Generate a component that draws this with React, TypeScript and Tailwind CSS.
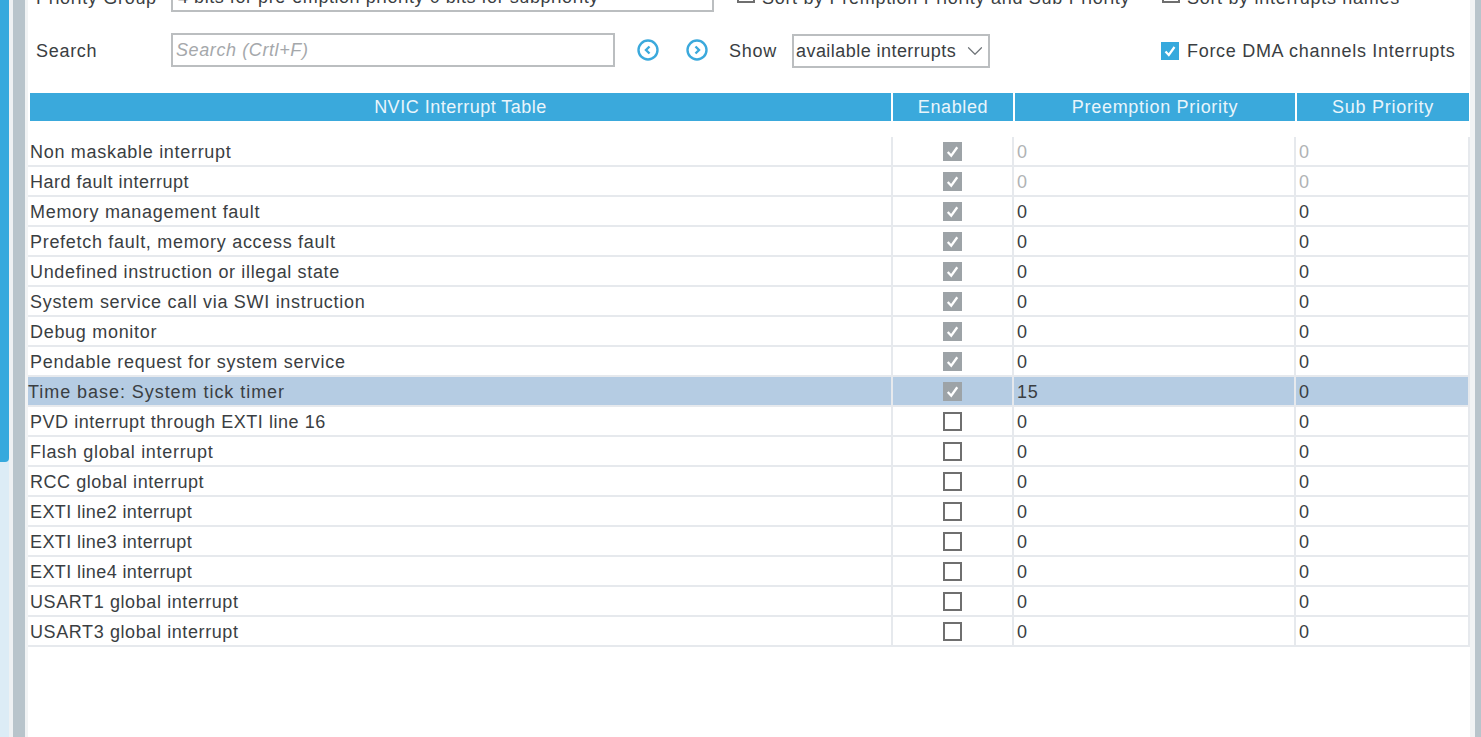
import { ChevronDown } from "lucide-react";

type Row = { name: string; on: boolean; pre: string; dim?: boolean; sel?: boolean; fit?: string };

const rows: Row[] = [
  { name: "Non maskable interrupt", on: true, pre: "0", dim: true },
  { name: "Hard fault interrupt", on: true, pre: "0", dim: true, fit: "tracking-[0.5px]" },
  { name: "Memory management fault", on: true, pre: "0" },
  { name: "Prefetch fault, memory access fault", on: true, pre: "0" },
  { name: "Undefined instruction or illegal state", on: true, pre: "0", fit: "tracking-[0.65px]" },
  { name: "System service call via SWI instruction", on: true, pre: "0" },
  { name: "Debug monitor", on: true, pre: "0" },
  { name: "Pendable request for system service", on: true, pre: "0" },
  { name: "Time base: System tick timer", on: true, pre: "15", sel: true, fit: "tracking-[0.95px]" },
  { name: "PVD interrupt through EXTI line 16", on: false, pre: "0", fit: "tracking-[0.55px]" },
  { name: "Flash global interrupt", on: false, pre: "0" },
  { name: "RCC global interrupt", on: false, pre: "0", fit: "tracking-[0.55px]" },
  { name: "EXTI line2 interrupt", on: false, pre: "0", fit: "tracking-[0.4px]" },
  { name: "EXTI line3 interrupt", on: false, pre: "0", fit: "tracking-[0.4px]" },
  { name: "EXTI line4 interrupt", on: false, pre: "0", fit: "tracking-[0.4px]" },
  { name: "USART1 global interrupt", on: false, pre: "0", fit: "tracking-[0.6px]" },
  { name: "USART3 global interrupt", on: false, pre: "0", fit: "tracking-[0.6px]" },
];

const headers = [
  { label: "NVIC Interrupt Table", cls: "tracking-[0.5px]" },
  { label: "Enabled", cls: "tracking-[0.6px]" },
  { label: "Preemption Priority", cls: "tracking-[0.7px]" },
  { label: "Sub Priority", cls: "tracking-[0.75px]" },
];

const Check = () => (
  <svg viewBox="0 0 18 18" className="w-full h-full" fill="none" stroke="white" strokeWidth="2.2">
    <path d="M4.5 9.5 L7.8 13 L13.5 5" />
  </svg>
);

const Box = ({ on }: { on: boolean }) =>
  on ? (
    <span className="block w-[19px] h-[19px] bg-[#9da3a7]">
      <Check />
    </span>
  ) : (
    <span className="block w-[19px] h-[19px] bg-white border-2 border-[#6f6f6f]" />
  );

const Circle = ({ d }: { d: string }) => (
  <svg viewBox="0 0 22 22" className="w-[22px] h-[22px]" fill="none" stroke="#3ba9dc">
    <circle cx="11" cy="11" r="9.5" strokeWidth="2.4" />
    <path d={d} strokeWidth="2.4" />
  </svg>
);

export default function App() {
  return (
    <div className="flex h-[737px] w-[1481px] overflow-hidden bg-white text-[18px] tracking-[0.7px] text-[#3a3e42] font-['Liberation_Sans',Arial,sans-serif]">
      {/* left edge with scroll thumb */}
      <div className="w-[9px] shrink-0 bg-[#dcecf6]">
        <div className="h-[462px] bg-[#36a9dd] rounded-br-[4px]" />
      </div>
      <div className="w-[4px] shrink-0 bg-[#eef1f3]" />
      <div className="w-[12px] shrink-0 bg-[#b8c4cb]" />
      <div className="w-[3px] shrink-0 bg-[#f1f3f4]" />

      <div className="w-[1442px] shrink-0">
        {/* clipped top row */}
        <div className="flex h-[36px] -mt-[24px] items-center">
          <span className="ml-[8px] w-[135px] whitespace-nowrap pt-[8px]">Priority Group</span>
          <div className="w-[543px] h-[36px] flex items-center px-[5px] pt-[6px] border-2 border-[#bbbec0] tracking-[0.55px] whitespace-nowrap">
            4 bits for pre-emption priority 0 bits for subpriority
          </div>
          <span className="ml-[23px] block w-[18px] h-[18px] bg-white border-2 border-[#6f6f6f]" />
          <span className="ml-[7px] w-[400px] whitespace-nowrap pt-[8px]">Sort by Premption Priority and Sub Priority</span>
          <span className="block w-[18px] h-[18px] bg-white border-2 border-[#6f6f6f]" />
          <span className="ml-[7px] whitespace-nowrap pt-[8px]">Sort by interrupts names</span>
        </div>

        {/* search row */}
        <div className="flex h-[34px] mt-[21px] items-center">
          <span className="ml-[8px] w-[135px] pt-[2px]">Search</span>
          <div className="w-[444px] h-[34px] flex items-center px-[3px] border-2 border-[#bbbec0] italic tracking-[0.6px] text-[#a5a8ab]">
            Search (Crtl+F)
          </div>
          <span className="ml-[22px]">
            <Circle d="M12.5 7.5 L9 11 L12.5 14.5" />
          </span>
          <span className="ml-[27px]">
            <Circle d="M9.5 7.5 L13 11 L9.5 14.5" />
          </span>
          <span className="ml-[21px] w-[63px] pt-[2px]">Show</span>
          <div className="mt-[2px] w-[198px] h-[34px] flex items-center justify-between pl-[2px] border-2 border-[#bbbec0] tracking-[0.45px] whitespace-nowrap">
            available interrupts
            <ChevronDown size={26} strokeWidth={1.1} className="text-[#6f7478]" />
          </div>
          <span className="ml-[171px] mt-[1px] block w-[18px] h-[18px] bg-[#36a9dd]">
            <Check />
          </span>
          <span className="ml-[8px] pt-[2px] whitespace-nowrap">Force DMA channels Interrupts</span>
        </div>

        {/* table header */}
        <div className="grid grid-cols-[861px_120px_280px_172px] gap-x-[2px] h-[28px] mt-[26px] ml-[2px] w-[1439px] bg-white text-[#e9f5fb]">
          {headers.map((h) => (
            <div key={h.label} className={"bg-[#3aa9dc] flex items-center justify-center " + h.cls}>
              {h.label}
            </div>
          ))}
        </div>

        {/* table rows */}
        <div className="mt-[16px] w-[1442px]">
          {rows.map((r) => (
            <div
              key={r.name}
              className={
                "grid grid-cols-[865px_121px_282px_174px] h-[30px] border-b-2 border-[#e6e9ed] " +
                (r.sel ? "bg-[#b5cce3]" : "")
              }
            >
              <div className={"flex items-center pt-[2px] border-r-2 border-[#e6e9ed] " + (r.sel ? "pl-0 " : "pl-[2px] ") + (r.fit ?? "")}>
                {r.name}
              </div>
              <div className="flex items-center justify-center border-r-2 border-[#e6e9ed]">
                <Box on={r.on} />
              </div>
              <div className={"flex items-center pl-[3px] pt-[2px] border-r-2 border-[#e6e9ed] " + (r.dim ? "text-[#b0b3b5]" : "")}>
                {r.pre}
              </div>
              <div className={"flex items-center pl-[3px] pt-[2px] border-r-2 border-[#e6e9ed] " + (r.dim ? "text-[#b0b3b5]" : "")}>
                0
              </div>
            </div>
          ))}
        </div>
      </div>

      {/* right edge */}
      <div className="w-[5px] shrink-0 bg-[#f1f3f4]" />
      <div className="flex-1 bg-[#b8c4cb]" />
    </div>
  );
}
